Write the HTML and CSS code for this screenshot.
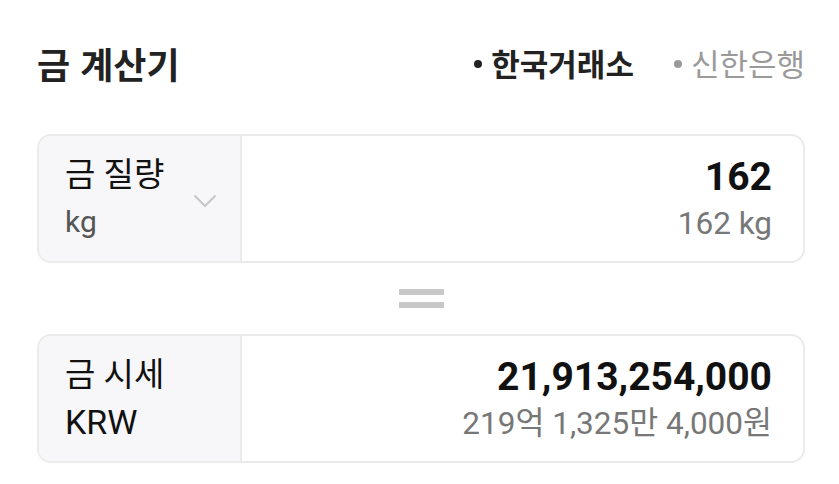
FILE: index.html
```html
<!DOCTYPE html>
<html lang="ko">
<head>
<meta charset="utf-8">
<title>금 계산기</title>
<link rel="stylesheet" href="styles.css">
</head>
<body>
<div class="page">
  <header class="header">
    <h1 class="title">금 계산기</h1>
    <nav class="tabs">
      <span class="tab tab-active"><span class="dot"></span>한국거래소</span>
      <span class="tab"><span class="dot"></span>신한은행</span>
    </nav>
  </header>

  <section class="box">
    <div class="label-cell">
      <div class="label-text">
        <div class="line1">금 질량</div>
        <div class="line2 unit-small">kg</div>
      </div>
      <svg class="chevron" width="24" height="14" viewBox="0 0 24 14" aria-hidden="true">
        <path d="M1.5 1.5 L12 12 L22.5 1.5" fill="none" stroke="#c6c6c6" stroke-width="2"/>
      </svg>
    </div>
    <div class="value-cell">
      <div class="main">162</div>
      <div class="sub">162 kg</div>
    </div>
  </section>

  <div class="equals">
    <span class="bar"></span>
    <span class="bar"></span>
  </div>

  <section class="box">
    <div class="label-cell">
      <div class="label-text">
        <div class="line1">금 시세</div>
        <div class="line2">KRW</div>
      </div>
    </div>
    <div class="value-cell">
      <div class="main">21,913,254,000</div>
      <div class="sub">219억 1,325만 4,000원</div>
    </div>
  </section>
</div>
</body>
</html>
```

FILE: styles.css
```css
* { box-sizing: border-box; }

html, body {
  margin: 0;
  padding: 0;
  background: #ffffff;
}

body {
  font-family: "Roboto", "Noto Sans CJK KR", sans-serif;
  color: #111111;
}

.page {
  padding: 0 34px 0 37px;
}

.header {
  height: 130px;
  padding-bottom: 5px;
  display: flex;
  align-items: center;
  justify-content: space-between;
}

.title {
  margin: 0;
  font-family: "Noto Sans CJK KR", sans-serif;
  font-size: 36px;
  font-weight: 700;
  line-height: 1;
  color: #222222;
}

.tabs {
  display: flex;
  align-items: center;
  gap: 40px;
}

.tab {
  display: flex;
  align-items: center;
  gap: 9px;
  font-family: "Noto Sans CJK KR", sans-serif;
  font-size: 31px;
  line-height: 1;
  color: #9a9a9a;
}

.tab .dot {
  width: 8px;
  height: 8px;
  border-radius: 50%;
  background: #9a9a9a;
  margin-top: 2px;
}

.tab-active {
  font-weight: 700;
  color: #222222;
}

.tab-active .dot {
  background: #222222;
}

.box {
  margin-top: 4px;
  height: 129px;
  display: grid;
  grid-template-columns: 203px 1fr;
  border: 2px solid #ebebeb;
  border-radius: 14px;
  overflow: hidden;
}

.equals + .box {
  margin-top: 0;
}

.label-cell {
  background: #f7f7f9;
  border-right: 2px solid #ebebeb;
  display: flex;
  align-items: flex-start;
  justify-content: space-between;
  padding: 15px 23px 0 26px;
}

.line1 {
  font-size: 33px;
  line-height: 48px;
  color: #111111;
}

.line2 {
  font-size: 34px;
  line-height: 46px;
  color: #111111;
}

.line2.unit-small {
  font-size: 30px;
  color: #555555;
}

.chevron {
  margin-top: 43px;
}

.value-cell {
  display: flex;
  flex-direction: column;
  align-items: flex-end;
  padding: 17px 31px 0 0;
}

.main {
  font-size: 39px;
  font-weight: 700;
  line-height: 48px;
  color: #111111;
}

.sub {
  font-size: 31.5px;
  line-height: 46px;
  color: #777777;
}

.equals {
  height: 71px;
  display: flex;
  flex-direction: column;
  align-items: center;
  justify-content: center;
  gap: 7px;
}

.equals .bar {
  width: 45px;
  height: 6px;
  background: #c8c8c8;
}
```
